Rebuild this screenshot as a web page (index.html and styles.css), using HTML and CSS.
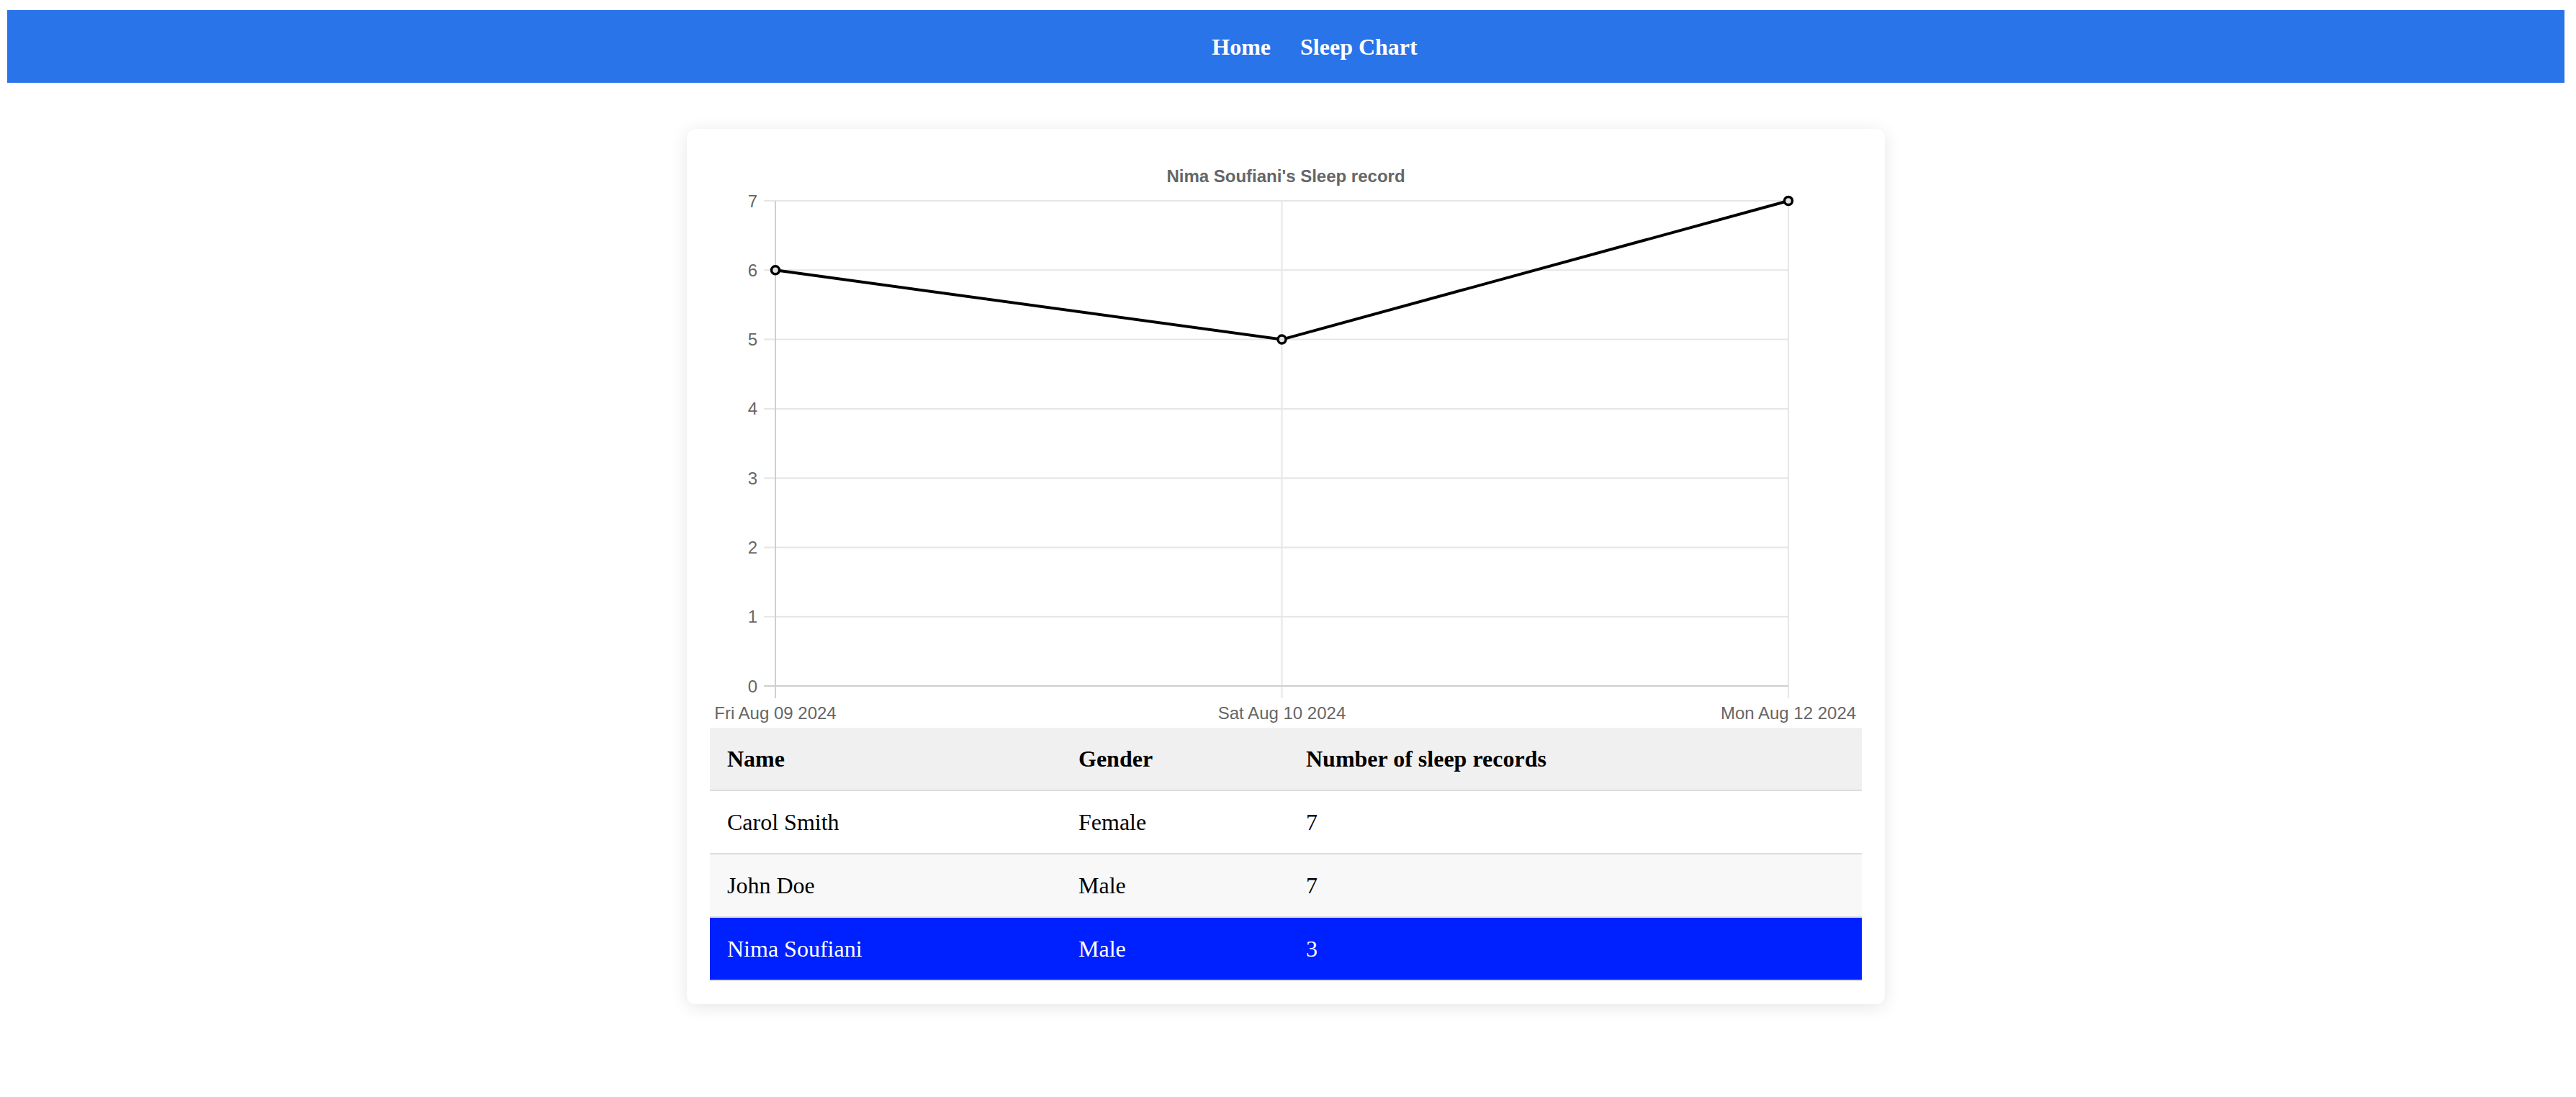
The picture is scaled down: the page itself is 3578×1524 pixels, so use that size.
FILE: index.html
```html
<!DOCTYPE html>
<html lang="en">
<head>
<meta charset="utf-8">
<title>Sleep Chart</title>
<link rel="stylesheet" href="styles.css">
</head>
<body>
<nav class="topnav">
  <a class="navlink" href="#">Home</a>
  <a class="navlink" href="#">Sleep Chart</a>
</nav>
<main class="page">
  <section class="card">
    <svg class="chart" width="1600" height="800" viewBox="0 0 1600 800" xmlns="http://www.w3.org/2000/svg">
      <text class="chart-title" x="800" y="42" text-anchor="middle">Nima Soufiani's Sleep record</text>
      <g class="grid" stroke="#e6e6e6" stroke-width="2">
        <line x1="75" y1="68" x2="1498" y2="68"/>
        <line x1="75" y1="164.3" x2="1498" y2="164.3"/>
        <line x1="75" y1="260.6" x2="1498" y2="260.6"/>
        <line x1="75" y1="356.9" x2="1498" y2="356.9"/>
        <line x1="75" y1="453.2" x2="1498" y2="453.2"/>
        <line x1="75" y1="549.4" x2="1498" y2="549.4"/>
        <line x1="75" y1="645.7" x2="1498" y2="645.7"/>
        <line x1="794.5" y1="68" x2="794.5" y2="759"/>
        <line x1="1498" y1="68" x2="1498" y2="759"/>
      </g>
      <g stroke="#cfcfcf" stroke-width="2">
        <line x1="75" y1="742" x2="1498" y2="742"/>
        <line x1="91" y1="68" x2="91" y2="759"/>
      </g>
      <g class="tick" text-anchor="end">
        <text x="66" y="76.5">7</text>
        <text x="66" y="172.8">6</text>
        <text x="66" y="269.1">5</text>
        <text x="66" y="365.4">4</text>
        <text x="66" y="461.7">3</text>
        <text x="66" y="557.9">2</text>
        <text x="66" y="654.2">1</text>
        <text x="66" y="750.5">0</text>
      </g>
      <g class="tick" text-anchor="middle">
        <text x="91" y="788">Fri Aug 09 2024</text>
        <text x="794.5" y="788">Sat Aug 10 2024</text>
        <text x="1498" y="788">Mon Aug 12 2024</text>
      </g>
      <polyline points="91,164.3 794.5,260.6 1498,68" fill="none" stroke="#000" stroke-width="4" stroke-linejoin="round"/>
      <g fill="#e2e2e2" stroke="#000" stroke-width="3.5">
        <circle cx="91" cy="164.3" r="5.5"/>
        <circle cx="794.5" cy="260.6" r="5.5"/>
        <circle cx="1498" cy="68" r="5.5"/>
      </g>
    </svg>
    <table class="records">
      <thead>
        <tr>
          <th class="col-name">Name</th>
          <th class="col-gender">Gender</th>
          <th class="col-count">Number of sleep records</th>
        </tr>
      </thead>
      <tbody>
        <tr><td>Carol Smith</td><td>Female</td><td>7</td></tr>
        <tr class="alt"><td>John Doe</td><td>Male</td><td>7</td></tr>
        <tr class="selected"><td>Nima Soufiani</td><td>Male</td><td>3</td></tr>
      </tbody>
    </table>
  </section>
</main>
</body>
</html>
```
FILE: styles.css
```css
html, body {
  margin: 0;
  padding: 0;
  background: #ffffff;
}

body {
  font-family: "Liberation Serif", "Times New Roman", serif;
  font-size: 32px;
  color: #000;
}

.topnav {
  margin: 14px 16px 0 10px;
  height: 101px;
  background: #2a74ea;
  display: flex;
  align-items: center;
  justify-content: center;
  gap: 41px;
  padding-left: 80px;
  box-sizing: border-box;
}

.navlink {
  color: #ffffff;
  font-weight: bold;
  font-size: 32px;
  text-decoration: none;
  line-height: 1;
}

.page {
  padding: 64px 16px 40px 10px;
}

.card {
  width: 1600px;
  margin: 0 auto;
  padding: 32px;
  background: #ffffff;
  border-radius: 12px;
  box-shadow: 0 4px 24px rgba(0, 0, 0, 0.1);
}

.chart {
  display: block;
}

.chart-title {
  font-family: "Liberation Sans", Arial, sans-serif;
  font-weight: bold;
  font-size: 24px;
  fill: #666666;
}

.tick {
  font-family: "Liberation Sans", Arial, sans-serif;
  font-size: 24px;
  fill: #666666;
}

.records {
  width: 100%;
  border-collapse: collapse;
}

.records th,
.records td {
  padding: 24px;
  line-height: 38px;
  text-align: left;
  border-bottom: 2px solid #dddddd;
}

.records th {
  background: #f0f0f0;
  font-weight: bold;
}

.col-name { width: 440px; }
.col-gender { width: 268px; }

.records tr.alt td {
  background: #f8f8f8;
}

.records tr.selected td {
  background: #0021ff;
  color: #ffffff;
}
```
